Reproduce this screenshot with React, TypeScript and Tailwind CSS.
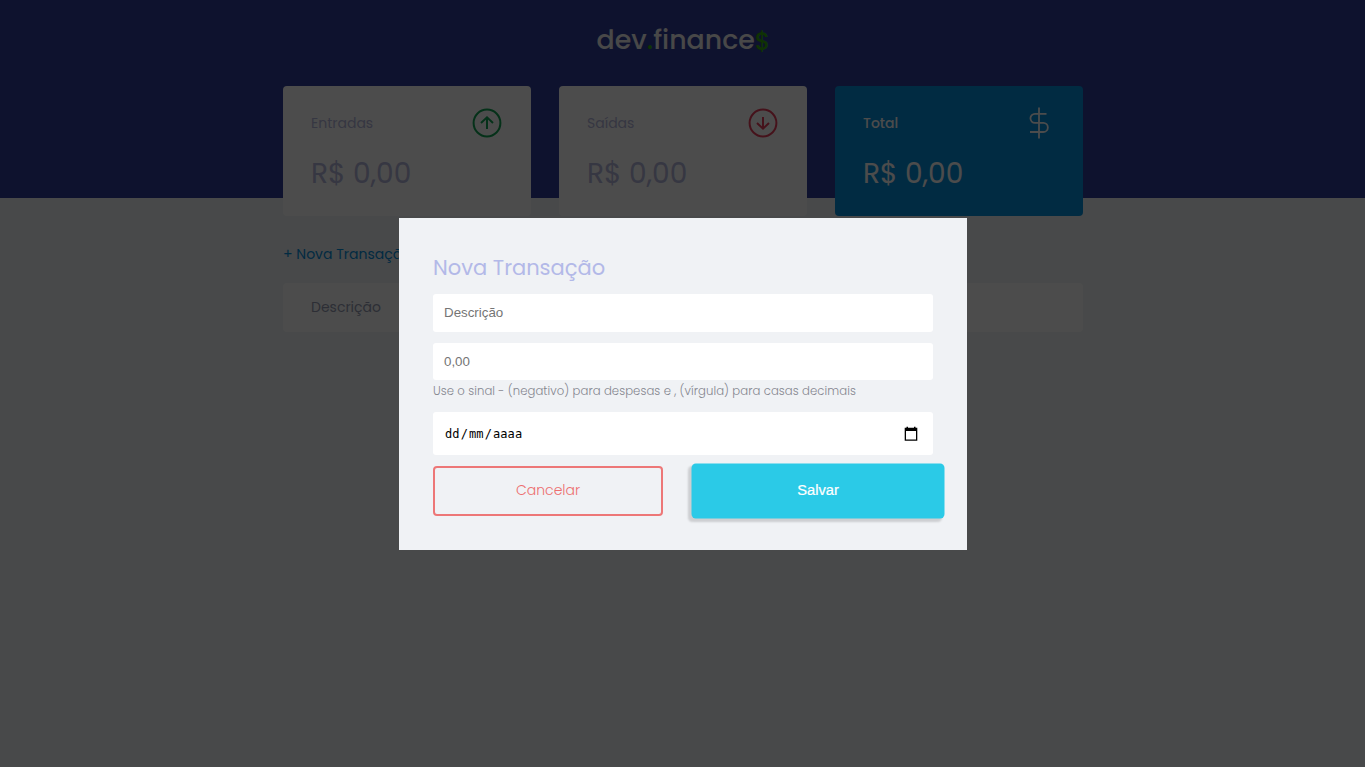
import React from "react";

const poppins = "font-['Poppins','Inter',sans-serif]";

type CardProps = {
  title: string;
  icon: React.ReactNode;
  className: string;
  titleClass: string;
  valueClass: string;
};

function Card({ title, icon, className, titleClass, valueClass }: CardProps) {
  return (
    <div className={`h-[130px] w-[248px] rounded-[4px] px-7 pt-[21px] ${className}`}>
      <h3 className="flex h-8 items-center justify-between">
        <span className={`text-[14px] ${titleClass}`}>{title}</span>
        {icon}
      </h3>
      <p className={`mt-[14px] text-[28px] leading-[42px] whitespace-nowrap ${valueClass}`}>R$ 0,00</p>
    </div>
  );
}

function ArrowIcon({ className, down }: { className: string; down?: boolean }) {
  return (
    <svg width="32" height="32" viewBox="0 0 32 32" fill="none" stroke="currentColor" strokeWidth="2" className={className}>
      <circle cx="16" cy="16" r="13.4" />
      <path d={down ? "M16 10v11.500M10 16l6 5.700 6-5.700" : "M16 22V10.500M10 16l6-5.700 6 5.700"} />
    </svg>
  );
}

function DollarIcon() {
  return (
    <svg width="32" height="32" viewBox="0 0 32 32" fill="none" stroke="currentColor" strokeWidth="1.8" className="text-white">
      <path d="M16 .5v31M23.500 6.800H12a4.550 4.550 0 0 0 0 9.100h8.300a4.550 4.550 0 0 1 0 9.100H7" />
    </svg>
  );
}

export default function App() {
  return (
    <div className={`relative h-[767px] w-[1365px] overflow-hidden bg-[#f1f4f7] ${poppins}`}>
      <header className="h-[198px] bg-[#2f3d99] pt-[19px] pl-[2px] text-center">
        <div className="text-[26.800px] leading-[42px] font-medium text-[#f2f2f2]">
          <span>dev</span>
          <span className="text-[#33b00f]">.</span>
          <span>finance</span>
          <span className="relative top-[1px] text-[24px] font-medium text-[#33a80f]">$</span>
        </div>
      </header>
      <main className="-mt-28 ml-[283px] w-[800px]">
        <section className="flex justify-between">
          <Card
            title="Entradas"
            className="bg-white"
            titleClass="text-[#b5b7dd]"
            valueClass="text-[#b5b7dd]"
            icon={<ArrowIcon className="text-[#12a454]" />}
          />
          <Card
            title="Saídas"
            className="bg-white"
            titleClass="text-[#b5b7dd]"
            valueClass="text-[#b5b7dd]"
            icon={<ArrowIcon down className="text-[#e83f5b]" />}
          />
          <Card
            title="Total"
            className="bg-[#068fdc]"
            titleClass="text-white font-medium"
            valueClass="text-white"
            icon={<DollarIcon />}
          />
        </section>
        <a className="mt-[28px] block text-[14px] leading-5 whitespace-nowrap text-[#068fdc]">+ Nova Transação</a>
        <div className="mt-[19px] flex h-[49px] items-center rounded-[4px] bg-white px-7 text-[14px] text-[#969cb3]">
          Descrição
        </div>
      </main>

      <div className="absolute inset-0 bg-black/70 pt-[218px] pl-[399px]">
        <div className="h-[332px] w-[568px] bg-[#f0f2f5] px-[34px] pt-[34px]">
          <h2 className="h-[42px] text-[21px] leading-[32px] whitespace-nowrap text-[#b3b9e8]">Nova Transação</h2>
          <div className="flex h-[38px] items-center rounded-[3px] bg-white px-[11px] font-['Liberation_Sans',sans-serif] text-[13.333px] text-[#757575]">
            Descrição
          </div>
          <div className="mt-[11px] flex h-[37px] items-center rounded-[3px] bg-white px-[11px] font-['Liberation_Sans',sans-serif] text-[13.333px] text-[#757575]">
            0,00
          </div>
          <small className="block h-8 text-[11.670px] leading-[22px] font-light tracking-[0.07px] whitespace-nowrap text-[#85868f]">
            Use o sinal - (negativo) para despesas e , (vírgula) para casas decimais
          </small>
          <div className="flex h-[43px] items-center justify-between rounded-[3px] bg-white pr-[15px] pl-[11px]">
            <span className="flex font-['DejaVu_Sans_Mono',monospace] text-[12px] tracking-[0.1px] text-black">
              <span className="px-px">dd</span>
              <span>/</span>
              <span className="px-px">mm</span>
              <span>/</span>
              <span className="px-px">aaaa</span>
            </span>
            <svg width="14" height="15" viewBox="0 0 14 15">
              <path fillRule="evenodd" d="M2.500 .7H4v1h6v-1h1.500v1H13.300V14.700H.7V1.700H2.500zM2 5v8.400h10V5z" fill="#000" />
            </svg>
          </div>
          <div className="mt-[11px] flex justify-between">
            <button className="h-[50px] w-[230px] rounded-[4px] border-2 border-[#ed7777] pb-[2px] text-[14px] font-light text-[#ed6f6f]">
              Cancelar
            </button>
            <button className="h-[50px] w-[230px] scale-110 rounded-[4px] bg-[#2bcae7] font-['Liberation_Sans',sans-serif] text-[13.333px] text-white shadow-[-3px_3px_2px_rgba(0,0,0,0.15)] [-webkit-text-stroke:0.2px_white]">
              Salvar
            </button>
          </div>
        </div>
      </div>
    </div>
  );
}
